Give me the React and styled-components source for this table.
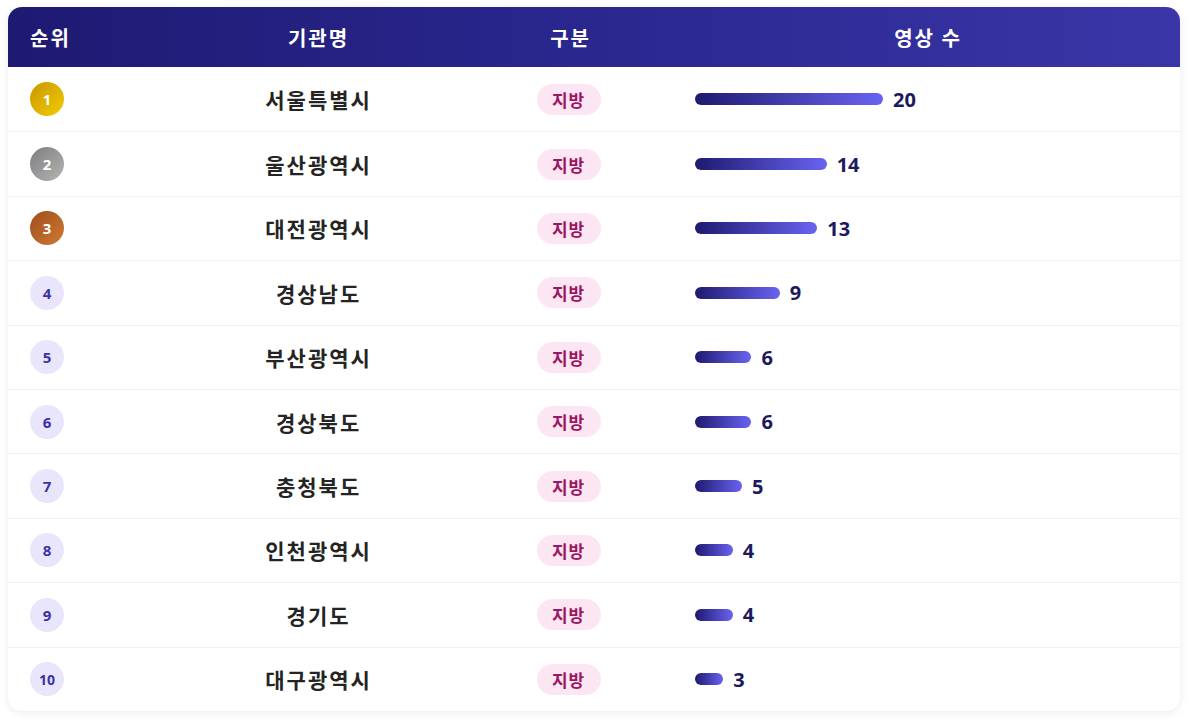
import React from "react";
import styled, { createGlobalStyle } from "styled-components";

const Global = createGlobalStyle`
  html, body { margin: 0; padding: 0; background: #ffffff; }
  body { font-family: "Noto Sans CJK KR", "Noto Sans", sans-serif; }
`;

const Page = styled.div`
  padding: 7px 11px 12px 8px;
`;

const Card = styled.div`
  width: 1172px;
  background: #ffffff;
  border-radius: 14px;
  box-shadow: 0 2px 8px rgba(30, 27, 110, 0.08);
  overflow: hidden;
`;

const cols = "14% 25% 18% 43%";

const HeaderRow = styled.div`
  display: grid;
  grid-template-columns: ${cols};
  height: 60px;
  align-items: center;
  background: linear-gradient(90deg, #1e1a72 0%, #2a278f 50%, #3a36a8 100%);
`;

const HeadCell = styled.div`
  color: #ffffff;
  font-weight: 700;
  font-size: 20px;
  letter-spacing: 2px;
  text-align: ${(p) => (p.$left ? "left" : "center")};
  padding: ${(p) => (p.$left ? "0 0 0 22px" : "0")};
`;

const Row = styled.div`
  display: grid;
  grid-template-columns: ${cols};
  height: 64.4px;
  align-items: center;
  border-top: ${(p) => (p.$first ? "none" : "1px solid #eef0f7")};
  box-sizing: border-box;
`;

const Cell = styled.div`
  display: flex;
  align-items: center;
  justify-content: ${(p) => p.$align || "center"};
  padding: ${(p) => p.$pad || "0"};
`;

const rankBg = {
  1: "linear-gradient(135deg, #c99700 0%, #f2cc00 100%)",
  2: "linear-gradient(135deg, #7d7d7d 0%, #b5b5b5 100%)",
  3: "linear-gradient(135deg, #a14d1c 0%, #cd7a35 100%)",
};

const Rank = styled.div`
  width: 34px;
  height: 34px;
  border-radius: 50%;
  display: flex;
  align-items: center;
  justify-content: center;
  font-family: "Noto Sans", sans-serif;
  font-weight: 700;
  font-size: ${(p) => (p.$n >= 10 ? "14px" : "15px")};
  color: ${(p) => (p.$n <= 3 ? "#ffffff" : "#3b33a8")};
  background: ${(p) => rankBg[p.$n] || "#e9e6fb"};
`;

const Name = styled.span`
  font-weight: 700;
  font-size: 21px;
  letter-spacing: 2px;
  color: #242424;
`;

const Badge = styled.span`
  display: inline-flex;
  align-items: center;
  justify-content: center;
  width: 64px;
  height: 31px;
  border-radius: 16px;
  background: #fde6f3;
  color: #9c1762;
  font-weight: 700;
  font-size: 17px;
  letter-spacing: 1px;
`;

const Bar = styled.div`
  height: 12px;
  border-radius: 6px;
  background: linear-gradient(90deg, #1e1a6e 0%, #6a63f2 100%);
`;

const Count = styled.span`
  margin-left: 10px;
  font-family: "Noto Sans", sans-serif;
  font-weight: 700;
  font-size: 20px;
  color: #1c1a5e;
`;

const data = [
  ["서울특별시", 20],
  ["울산광역시", 14],
  ["대전광역시", 13],
  ["경상남도", 9],
  ["부산광역시", 6],
  ["경상북도", 6],
  ["충청북도", 5],
  ["인천광역시", 4],
  ["경기도", 4],
  ["대구광역시", 3],
];

export default function App() {
  return (
    <>
      <Global />
      <Page>
        <Card>
          <HeaderRow>
            <HeadCell $left>순위</HeadCell>
            <HeadCell>기관명</HeadCell>
            <HeadCell>구분</HeadCell>
            <HeadCell>영상 수</HeadCell>
          </HeaderRow>
          {data.map(([name, n], i) => (
            <Row key={name} $first={i === 0}>
              <Cell $align="flex-start" $pad="0 0 0 22px">
                <Rank $n={i + 1}>{i + 1}</Rank>
              </Cell>
              <Cell>
                <Name>{name}</Name>
              </Cell>
              <Cell $pad="0 4px 0 0">
                <Badge>지방</Badge>
              </Cell>
              <Cell $align="flex-start" $pad="0 0 0 19px">
                <Bar style={{ width: `${n * 9.4}px` }} />
                <Count>{n}</Count>
              </Cell>
            </Row>
          ))}
        </Card>
      </Page>
    </>
  );
}
